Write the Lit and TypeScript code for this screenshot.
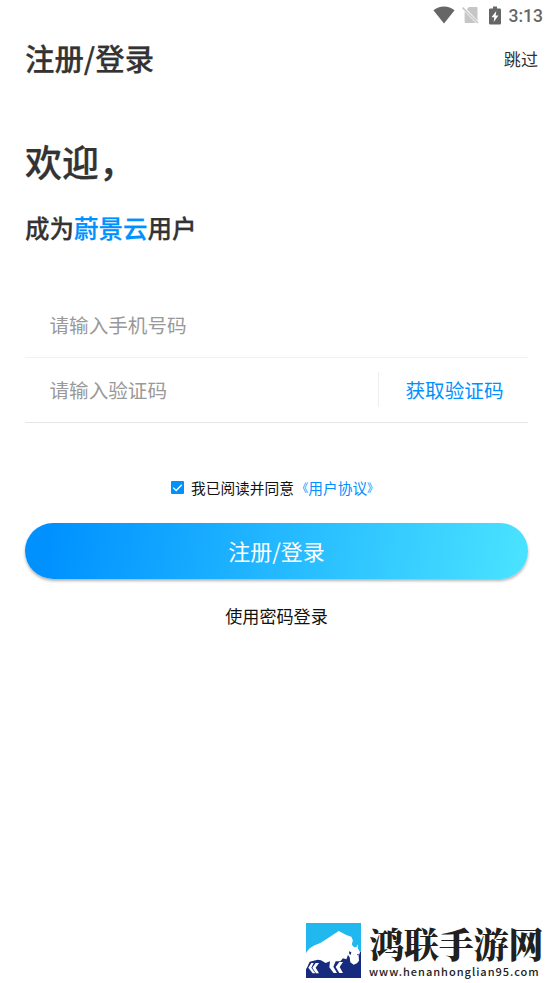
import { LitElement, html, css } from "lit";
import { customElement } from "lit/decorators.js";

@customElement("status-bar")
class StatusBar extends LitElement {
  static styles = css`
    :host {
      display: flex;
      height: 30px;
      justify-content: flex-end;
      align-items: center;
      padding-right: 10px;
      box-sizing: border-box;
      color: #666;
      font: 500 17.500px/30px Roboto, sans-serif;
    }
    .wifi { margin-right: 7px; }
    .sim { margin-right: 10px; }
    .battery { margin-right: 8px; }
    .time { padding-top: 2px; }
  `;
  render() {
    return html`
      <svg class="wifi" width="22" height="18" viewBox="0 0 22 18">
        <path fill="#666" d="M0.4 4.2C3.4 1.7 7 .4 11 .4s7.600 1.300 10.600 3.800L11 17.400z" />
      </svg>
      <svg class="sim" width="17" height="18" viewBox="0 0 17 18">
        <path fill="#c6c6c6" d="M7 1h7.500q1 0 1 1v12.800L4.800 3.300zM2.600 5.600L14 17H3.600q-1 0-1-1z" />
        <path stroke="#c6c6c6" stroke-width="1.500" d="M.6 1.600L16 17" />
      </svg>
      <svg class="battery" width="12" height="19" viewBox="0 0 12 19">
        <path fill="#666" d="M4 .5h4v2h2.800q1.200 0 1.200 1.200v13.600q0 1.200-1.200 1.200H1.200Q0 18.500 0 17.300V3.700Q0 2.500 1.200 2.500H4z" />
        <path fill="#fff" d="M7.300 5L2.500 11.300h2.800L4.700 16 9.500 9.600H6.700z" />
      </svg>
      <span class="time">3:13</span>
    `;
  }
}

@customElement("site-mark")
class SiteMark extends LitElement {
  static styles = css`
    :host { display: flex; gap: 8px; width: 238px; height: 56px; }
    .logo { flex: none; }
    .words { display: flex; flex-direction: column; white-space: nowrap; }
    .name {
      height: 41px;
      font: 900 34.900px/40px "Noto Serif CJK SC", "Noto Sans CJK SC", serif;
      color: #202020;
    }
    .url {
      font: 500 11px/14px "Noto Sans CJK SC", sans-serif;
      letter-spacing: 1px;
      color: #222;
    }
  `;
  render() {
    return html`
      <svg class="logo" width="55" height="55" viewBox="7 9 165 165">
        <path fill="#20b8ee" d="M7 9h165v86H7z" />
        <path fill="#172b7e" d="M7 95h165v79H7z" />
        <path fill="#fff" d="M7 98L18 85 33 76 50 69 78 51 105 33 128 45 143 50 148 62 145 74 152 82 158 82 163 72 162 84 169 97 165 108 166 122 160 130 150 134 140 127 138 112 133 105 128 118 118 115 110 124 96 124 89 140 100 159H90L77 142 79 124 66 129 52 121 42 119 18 125 11 141 7 148z" />
        <path fill="#20b8ee" d="M151 40L154 52 160 58 161 69 157 80 152 81 145 74 148 61z" />
        <path fill="#172b7e" d="M136 94l7 3-2 8-4-3zM160 103l5-2-1 7z" />
        <path fill="#fff" d="M30 129h-7L14 143l13 17h8L23 143zM46 129H36L26 143l11 17h9l-10-17zM118 126h-11L96 141l11 18h11l-10-18z" />
      </svg>
      <div class="words">
        <span class="name">鸿联手游网</span>
        <span class="url">www.henanhonglian95.com</span>
      </div>
    `;
  }
}

@customElement("app-root")
class AppRoot extends LitElement {
  static styles = css`
    :host {
      display: flex;
      flex-direction: column;
      height: 983px;
      background: #fff;
      color: #333;
      font-family: "Noto Sans CJK SC", sans-serif;
      overflow: hidden;
    }
    header {
      display: flex;
      justify-content: space-between;
      align-items: center;
      height: 58px;
      padding: 0 15px 0 25px;
    }
    .title {
      font-size: 29.400px;
      font-weight: 500;
      line-height: 42px;
      padding-bottom: 4px;
      -webkit-text-stroke: 0.25px currentColor;
    }
    .skip { font-size: 17.100px; line-height: 24px; }
    main {
      flex: 1;
      display: flex;
      flex-direction: column;
      padding: 48px 25px 0;
    }
    h1, h2 { font-weight: 500; -webkit-text-stroke: 0.25px currentColor; }
    h1 { margin: 0; font-size: 37px; line-height: 50px; }
    h2 { margin: 25px 0 49px; font-size: 24.500px; line-height: 34px; }
    .blue { color: #0091ff; }
    .field {
      display: flex;
      align-items: center;
      height: 60px;
      padding: 0 0 3px 24.500px;
      border-bottom: 1px solid #f1f1f1;
      color: #999;
      font-size: 19.600px;
    }
    .field.code { height: 62px; padding-bottom: 2px; border-color: #e6e6e6; }
    .get {
      margin-left: auto;
      width: 151px;
      margin-right: -2px;
      height: 35px;
      line-height: 35px;
      border-left: 1px solid #eee;
      text-align: center;
      color: #0091ff;
    }
    .agree {
      display: flex;
      justify-content: flex-start;
      align-items: center;
      height: 20px;
      margin: 54px 0 26px;
      padding-left: 146px;
      font-size: 14.700px;
      color: #111;
    }
    .check { margin-right: 7px; }
    .agree .blue { display: flex; align-items: center; margin-left: 3px; }
    .mark { font-size: 11.500px; }
    .submit {
      height: 56px;
      border-radius: 28px;
      background: linear-gradient(100deg, #0091ff 5%, #48e1ff 97%);
      box-shadow: 0 2px 3px rgba(0, 0, 0, 0.3);
      color: #fff;
      font-size: 22px;
      line-height: 54px;
      text-align: center;
    }
    .password {
      margin-top: 25px;
      color: #111;
      font-size: 17.100px;
      line-height: 24px;
      text-align: center;
    }
    footer { display: flex; justify-content: flex-end; padding: 0 9px 4px 0; }
  `;
  render() {
    return html`
      <status-bar></status-bar>
      <header><span class="title">注册/登录</span><span class="skip">跳过</span></header>
      <main>
        <h1>欢迎，</h1>
        <h2>成为<span class="blue">蔚景云</span>用户</h2>
        <div class="field">请输入手机号码</div>
        <div class="field code">请输入验证码<span class="get">获取验证码</span></div>
        <div class="agree">
          <svg class="check" width="13" height="13" viewBox="0 0 13 13">
            <rect width="13" height="13" rx="1" fill="#0091ff" />
            <path d="M2.200 6.600l3 2.900 5.600-5.700" fill="none" stroke="#fff" stroke-width="1.300" />
          </svg>
          <span>我已阅读并同意</span><span class="blue"><span class="mark">《</span>用户协议<span class="mark">》</span></span>
        </div>
        <div class="submit">注册/登录</div>
        <div class="password">使用密码登录</div>
      </main>
      <footer><site-mark></site-mark></footer>
    `;
  }
}
